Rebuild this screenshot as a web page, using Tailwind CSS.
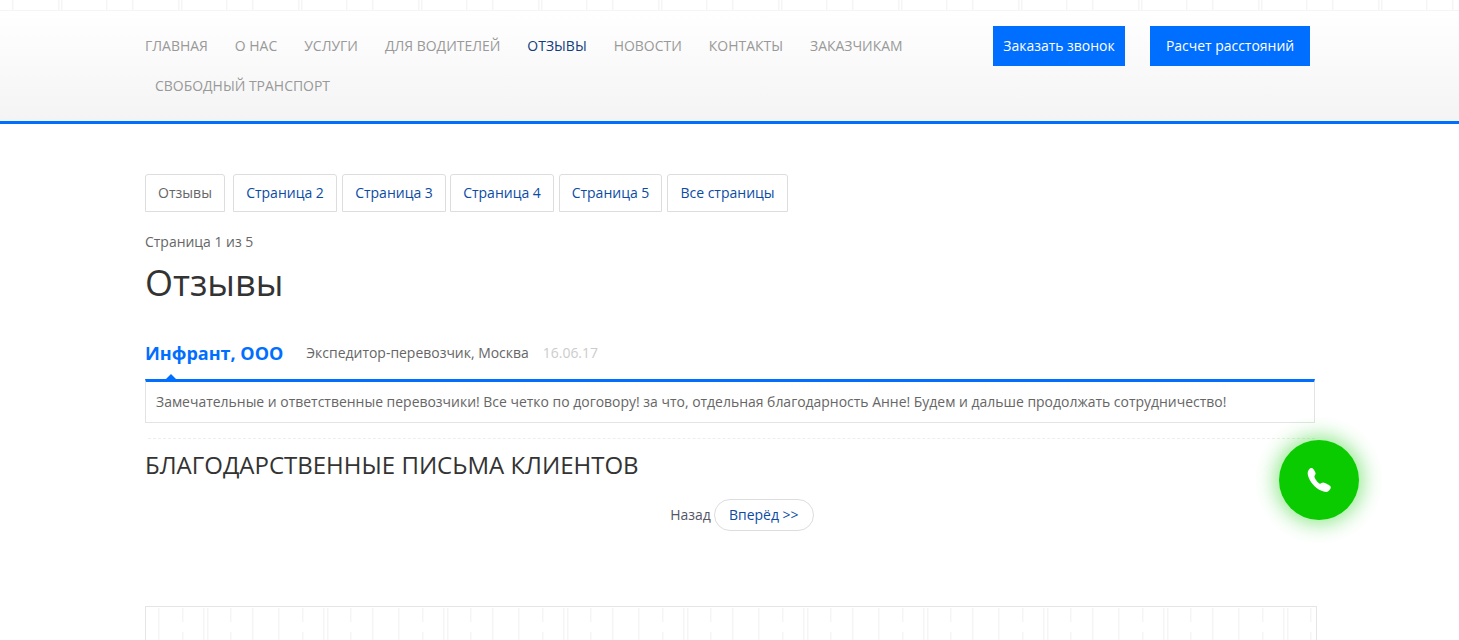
<!DOCTYPE html>
<html lang="ru">
<head>
  <meta charset="UTF-8" />
  <title>Отзывы</title>
  <script src="https://cdn.jsdelivr.net/npm/@tailwindcss/browser@4"></script>
</head>
<body class="bg-white font-['Open_Sans',sans-serif] text-[13.96px] text-[#666] overflow-hidden h-[640px] relative">
  <!-- brick strip above the header -->
  <svg class="block w-full h-[11px]" aria-hidden="true">
    <defs>
      <pattern id="bricksTop" width="120" height="11" patternUnits="userSpaceOnUse">
        <rect x="12" width="1.5" height="10" fill="#f5f5f5" />
        <rect x="58" width="1.5" height="10" fill="#f5f5f5" />
        <rect x="61" width="1.5" height="10" fill="#f5f5f5" />
        <rect x="106" width="1.5" height="10" fill="#f5f5f5" />
        <rect y="10" width="120" height="1" fill="#f5f5f5" />
      </pattern>
    </defs>
    <rect width="100%" height="11" fill="url(#bricksTop)" />
  </svg>

  <header class="h-[113px] border-b-[3px] border-[#006eff] bg-gradient-to-b from-white to-[#f4f4f4] pl-[145px] flex items-start">
    <nav class="w-[830px] flex flex-wrap pt-[15px] uppercase text-[#999]">
      <a class="h-[40px] leading-[40px] pr-[27px]">Главная</a>
      <a class="h-[40px] leading-[40px] pr-[27px]">О нас</a>
      <a class="h-[40px] leading-[40px] pr-[27px]">Услуги</a>
      <a class="h-[40px] leading-[40px] pr-[27px]">Для водителей</a>
      <a class="h-[40px] leading-[40px] pr-[27px] text-[#123c7c]">Отзывы</a>
      <a class="h-[40px] leading-[40px] pr-[27px]">Новости</a>
      <a class="h-[40px] leading-[40px] pr-[27px]">Контакты</a>
      <a class="h-[40px] leading-[40px] pr-[27px]">Заказчикам</a>
      <a class="h-[40px] leading-[40px] pl-[10px]">Свободный транспорт</a>
    </nav>
    <div class="flex gap-[25px] ml-[18px] pt-[15px] text-white">
      <a class="w-[132px] h-[40px] leading-[40px] text-center bg-[#006eff]">Заказать звонок</a>
      <a class="w-[160px] h-[40px] leading-[40px] text-center bg-[#006eff]">Расчет расстояний</a>
    </div>
  </header>

  <main class="w-[1170px] ml-[145px] pt-[50px]">
    <div class="flex text-[#0b4ba5] text-[14px]">
      <a class="w-[80px] text-center h-[38px] leading-[36px] border border-[#ddd] rounded-t-[3px] mr-[8px] text-[#666]">Отзывы</a>
      <a class="w-[104px] text-center h-[38px] leading-[36px] border border-[#ddd] rounded-t-[3px] mr-[5px]">Страница 2</a>
      <a class="w-[104px] text-center h-[38px] leading-[36px] border border-[#ddd] rounded-t-[3px] mr-[4px]">Страница 3</a>
      <a class="w-[104px] text-center h-[38px] leading-[36px] border border-[#ddd] rounded-t-[3px] mr-[5px]">Страница 4</a>
      <a class="w-[103px] text-center h-[38px] leading-[36px] border border-[#ddd] rounded-t-[3px] mr-[5px]">Страница 5</a>
      <a class="w-[121px] text-center h-[38px] leading-[36px] border border-[#ddd] rounded-t-[3px]">Все страницы</a>
    </div>
    <p class="mt-[20px] h-[20px] leading-[20px]">Страница 1 из 5</p>
    <h1 class="mt-[9px] h-[44px] leading-[44px] text-[36px] text-[#333]">Отзывы</h1>

    <div class="mt-[33px] mb-[11px] h-[30px] flex items-center">
      <b class="text-[18px] font-bold text-[#006eff] mr-[23px]">Инфрант, ООО</b>
      <span class="mr-[14px]">Экспедитор-перевозчик, Москва</span>
      <span class="text-[#ccc]">16.06.17</span>
    </div>
    <div class="relative border-t-[3px] border-[#006eff] border-x border-b border-x-[#e3e3e3] border-b-[#e3e3e3] h-[44px] leading-[40px] pl-[10px]">
      <span class="absolute left-[20px] -top-[8px] w-0 h-0 border-x-[5px] border-x-transparent border-b-[5px] border-b-[#006eff]"></span>
      Замечательные и ответственные перевозчики! Все четко по договору! за что, отдельная благодарность Анне! Будем и дальше продолжать сотрудничество!
    </div>
    <div class="mt-[15px] ml-[3px] border-t border-dashed border-[#eee]"></div>
    <h2 class="mt-[11px] h-[30px] leading-[30px] text-[24px] uppercase text-[#333]">Благодарственные письма клиентов</h2>
    <div class="mt-[19px] flex items-center justify-center pl-[24px]">
      <span class="text-[#556] mr-[3px]">Назад</span>
      <a class="h-[32px] w-[100px] leading-[30px] text-center border border-[#ddd] rounded-full text-[#0b4ba5]">Вперёд &gt;&gt;</a>
    </div>
  </main>

  <!-- brick panel at the bottom -->
  <svg class="absolute left-[145px] top-[606px] w-[1172px] h-[34px]" aria-hidden="true">
    <defs>
      <pattern id="bricksBottom" width="120" height="34" patternUnits="userSpaceOnUse">
        <rect x="13" y="2" width="1.5" height="32" fill="#f5f5f5" />
        <rect x="37" y="2" width="1.5" height="14" fill="#f5f5f5" />
        <rect x="37" y="26" width="1.5" height="8" fill="#f5f5f5" />
        <rect x="58" y="2" width="1.5" height="32" fill="#f5f5f5" />
        <rect x="62" y="2" width="1.5" height="32" fill="#f5f5f5" />
        <rect x="85" y="2" width="1.5" height="14" fill="#f5f5f5" />
        <rect x="85" y="26" width="1.5" height="8" fill="#f5f5f5" />
        <rect x="107" y="2" width="1.5" height="32" fill="#f5f5f5" />
      </pattern>
    </defs>
    <rect width="100%" height="34" fill="url(#bricksBottom)" />
    <rect x="0.5" y="0.5" width="1171" height="40" fill="none" stroke="#e5e5e5" />
  </svg>

  <!-- floating call button -->
  <a class="absolute left-[1279px] top-[440px] w-[80px] h-[80px] rounded-full bg-[#0acb00] shadow-[0_0_20px_4px_rgba(10,203,0,0.45)] flex items-center justify-center">
    <svg class="w-[26px] h-[26px]" viewBox="0 0 26 26" aria-hidden="true">
      <path d="M3 2.5 C4 1.3 5.5 .8 6.3 1.2 C7.5 1.8 9.5 5 9.6 6.3 C9.7 7.6 8.5 8.3 8.4 9.6 C8.4 11.3 12 16.3 13.8 16.8 C15 17 15.8 15.6 17.2 15.6 C18.8 15.7 24.2 18.5 24.8 19.8 C25.2 21 23.5 23.7 22 24.5 C20.5 25.3 17.5 24.8 15 23.6 C9 20.8 3.5 14.5 2 8.5 C1.3 6 1.8 3.8 3 2.5 Z" fill="#fff" />
    </svg>
  </a>
</body>
</html>
